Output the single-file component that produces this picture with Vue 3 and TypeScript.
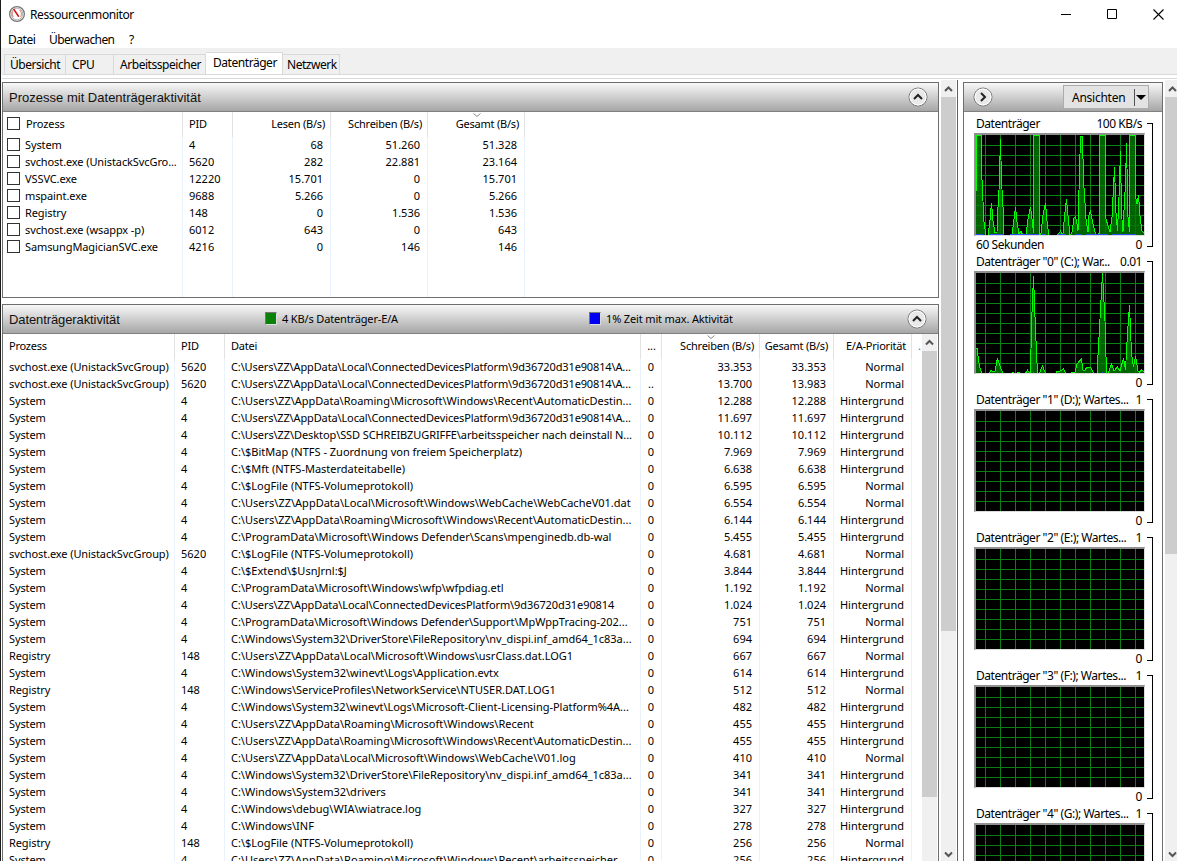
<script setup lang="ts">
interface Proc { name: string; pid: string; read: string; write: string; total: string }
interface Act { name: string; pid: string; file: string; read: string; write: string; total: string; prio: string }
interface Chart { title: string; max: string; min: string; foot: string; points: string; blue: string }

const tabs = [
  { label: 'Übersicht', cls: 't1' },
  { label: 'CPU', cls: 't2' },
  { label: 'Arbeitsspeicher', cls: 't3' },
  { label: 'Datenträger', cls: 't4 active' },
  { label: 'Netzwerk', cls: 't5' },
]

const procs: Proc[] = [
  ['System', '4', '68', '51.260', '51.328'],
  ['svchost.exe (UnistackSvcGro...', '5620', '282', '22.881', '23.164'],
  ['VSSVC.exe', '12220', '15.701', '0', '15.701'],
  ['mspaint.exe', '9688', '5.266', '0', '5.266'],
  ['Registry', '148', '0', '1.536', '1.536'],
  ['svchost.exe (wsappx -p)', '6012', '643', '0', '643'],
  ['SamsungMagicianSVC.exe', '4216', '0', '146', '146'],
].map(([name, pid, read, write, total]) => ({ name, pid, read, write, total }))

const S = 'System'
const G = 'svchost.exe (UnistackSvcGroup)'
const R = 'Registry'
const H = 'Hintergrund'
const N = 'Normal'
const U = 'C:\\Users\\ZZ\\AppData\\'
const W = 'C:\\Windows\\'
const acts: Act[] = [
  [G, '5620', U + 'Local\\ConnectedDevicesPlatform\\9d36720d31e90814\\A...', '0', '33.353', '33.353', N],
  [G, '5620', U + 'Local\\ConnectedDevicesPlatform\\9d36720d31e90814\\A...', '..', '13.700', '13.983', N],
  [S, '4', U + 'Roaming\\Microsoft\\Windows\\Recent\\AutomaticDestin...', '0', '12.288', '12.288', H],
  [S, '4', U + 'Local\\ConnectedDevicesPlatform\\9d36720d31e90814\\A...', '0', '11.697', '11.697', H],
  [S, '4', 'C:\\Users\\ZZ\\Desktop\\SSD SCHREIBZUGRIFFE\\arbeitsspeicher nach deinstall N...', '0', '10.112', '10.112', H],
  [S, '4', 'C:\\$BitMap (NTFS - Zuordnung von freiem Speicherplatz)', '0', '7.969', '7.969', H],
  [S, '4', 'C:\\$Mft (NTFS-Masterdateitabelle)', '0', '6.638', '6.638', H],
  [S, '4', 'C:\\$LogFile (NTFS-Volumeprotokoll)', '0', '6.595', '6.595', N],
  [S, '4', U + 'Local\\Microsoft\\Windows\\WebCache\\WebCacheV01.dat', '0', '6.554', '6.554', N],
  [S, '4', U + 'Roaming\\Microsoft\\Windows\\Recent\\AutomaticDestin...', '0', '6.144', '6.144', H],
  [S, '4', 'C:\\ProgramData\\Microsoft\\Windows Defender\\Scans\\mpenginedb.db-wal', '0', '5.455', '5.455', H],
  [G, '5620', 'C:\\$LogFile (NTFS-Volumeprotokoll)', '0', '4.681', '4.681', N],
  [S, '4', 'C:\\$Extend\\$UsnJrnl:$J', '0', '3.844', '3.844', H],
  [S, '4', 'C:\\ProgramData\\Microsoft\\Windows\\wfp\\wfpdiag.etl', '0', '1.192', '1.192', N],
  [S, '4', U + 'Local\\ConnectedDevicesPlatform\\9d36720d31e90814', '0', '1.024', '1.024', H],
  [S, '4', 'C:\\ProgramData\\Microsoft\\Windows Defender\\Support\\MpWppTracing-202...', '0', '751', '751', N],
  [S, '4', W + 'System32\\DriverStore\\FileRepository\\nv_dispi.inf_amd64_1c83a...', '0', '694', '694', H],
  [R, '148', U + 'Local\\Microsoft\\Windows\\usrClass.dat.LOG1', '0', '667', '667', N],
  [S, '4', W + 'System32\\winevt\\Logs\\Application.evtx', '0', '614', '614', H],
  [R, '148', W + 'ServiceProfiles\\NetworkService\\NTUSER.DAT.LOG1', '0', '512', '512', N],
  [S, '4', W + 'System32\\winevt\\Logs\\Microsoft-Client-Licensing-Platform%4A...', '0', '482', '482', H],
  [S, '4', U + 'Roaming\\Microsoft\\Windows\\Recent', '0', '455', '455', H],
  [S, '4', U + 'Roaming\\Microsoft\\Windows\\Recent\\AutomaticDestin...', '0', '455', '455', H],
  [S, '4', U + 'Local\\Microsoft\\Windows\\WebCache\\V01.log', '0', '410', '410', N],
  [S, '4', W + 'System32\\DriverStore\\FileRepository\\nv_dispi.inf_amd64_1c83a...', '0', '341', '341', H],
  [S, '4', W + 'System32\\drivers', '0', '341', '341', H],
  [S, '4', W + 'debug\\WIA\\wiatrace.log', '0', '327', '327', H],
  [S, '4', W + 'INF', '0', '278', '278', H],
  [R, '148', 'C:\\$LogFile (NTFS-Volumeprotokoll)', '0', '256', '256', N],
  [S, '4', U + 'Roaming\\Microsoft\\Windows\\Recent\\arbeitsspeicher', '0', '256', '256', H],
].map(([name, pid, file, read, write, total, prio]) => ({ name, pid, file, read, write, total, prio }))

function spacing(file: string): string {
  if (file.includes('ConnectedDevices')) return file.endsWith('...') ? 'tight' : 'semi'
  if (file.includes('SCHREIBZUGRIFFE')) return 'semi'
  if (file.endsWith('...')) return 'slight'
  return ''
}

const load = '0,57 1,0 5,0 6,45 8,87 10,101 12,101 14,85 15.5,68 17,86 19,98 20,97 21,97 22,72 23,55 24.5,4 25.5,45 27,72 28,101 36,101 38,84 39.5,72 41,87 43,99 45,96 47,101 50,101 52,84 54.5,72 56,84 57.5,98 57.5,0 63.5,0 63.5,101 65,98 67,80 69.5,68 71,86 73,101 81,101 84.5,96 86,99 87,98 89,77 90.5,64 92,81 94,101 96,97 98,83 99.5,82 101,89 102,96 103,55 104.5,1 106.5,1 107.5,45 109,68 110,84 112,97 113,80 114.5,76 117,89 119,97 121,101 123.5,98 123.5,0 129.5,0 129.5,82 132,91 134,97 136,82 138.5,32 140,78 141.5,96 143,62 144.5,16 145.5,78 147,97 148,75 149.5,48 150.5,8 152,82 153.5,97 153.5,0 159.5,0 159.5,61 161,69 162.5,60 164,81 166,96 168,98'
const queue = '0,75 1,75 3,90 4.5,97 6.5,101 13,101 15,97 17,99 19,98 21.5,85 24,93 27,101 35,101 37,99 39,101 43,99 45,101 49,101 51.5,97 53,99 54.5,100 55.5,52 57.5,3 59.5,57 61.5,101 63,101 66.5,93 69,99 71,101 79,101 81.5,98 84,98 87.5,96 90,101 94,101 96,99 99,99 101,91 103.5,88 105.5,86 107,97 109,97 111,94 115,95 118,101 121,101 123.5,55 126.5,0 129,48 130.5,101 132,101 135.5,91 138,98 141.5,94 144,98 147.5,85 149.5,97 151.5,60 153.5,32 155.5,80 157.5,94 159.5,83 162,98 163.5,99 165.5,97 168,99'

const charts: Chart[] = [
  { title: 'Datenträger', max: '100 KB/s', min: '0', foot: '60 Sekunden', points: load, blue: 'M0 99.5H7M13 99.5H28M34 99.5H63M66 99.5H70M82 99.5H90M100 99.5H106M110 99.5H132M136 99.5H160' },
  { title: 'Datenträger "0" (C:); War...', max: '0.01', min: '0', foot: '', points: queue, blue: 'M21 99.5H22M57 99.5H58M126 99.5H127M153 99.5H154' },
  ...['"1" (D:)', '"2" (E:)', '"3" (F:)', '"4" (G:)'].map((d) => ({
    title: `Datenträger ${d}; Wartes...`, max: '1', min: '0', foot: '', points: '', blue: '',
  })),
]

const grid =
  Array.from({ length: 9 }, (_, i) => `M0 ${i * 10 + 10.5}H168`).join('') +
  Array.from({ length: 11 }, (_, i) => `M${i * 15 + 9.5} 0V100`).join('')
</script>

<template>
  <div class="window">
    <header class="titlebar">
      <svg class="logo" width="18" height="18" viewBox="0 0 18 18">
        <circle cx="9" cy="9" r="7.4" fill="#f4f4f2" stroke="#77777a" stroke-width="1.3" />
        <circle cx="9" cy="9" r="5.8" fill="#fff" stroke="#b9b9b4" stroke-width="1" />
        <path d="M5 6.2A5 5 0 0 0 5.3 12M11.5 5A5 5 0 0 1 12.5 12" fill="none" stroke="#d99a80" stroke-width="1.2" />
        <path d="M4.8 4.2L6.4 3.8L11.6 11.6L10 12Z" fill="#d4141c" />
      </svg>
      <span class="app-name">Ressourcenmonitor</span>
      <div class="controls">
        <svg width="11" height="11"><path d="M0 5.5H10" stroke="#000" /></svg>
        <svg width="11" height="11"><path d="M.5 .5H9.5V9.5H.5Z" fill="none" stroke="#000" /></svg>
        <svg width="11" height="11"><path d="M.5 .5L10.5 10.5M10.5 .5L.5 10.5" stroke="#000" stroke-width="1.1" /></svg>
      </div>
    </header>
    <nav class="menu"><span class="m1">Datei</span><span class="m2">Überwachen</span><span>?</span></nav>
    <div class="tabs">
      <div v-for="t in tabs" :key="t.label" class="tab" :class="t.cls"><span>{{ t.label }}</span></div>
    </div>
    <div class="strip"></div>

    <main class="body">
      <div class="left">
        <section class="panel procs">
          <div class="bar">
            <h2>Prozesse mit Datenträgeraktivität</h2>
            <svg class="round" width="20" height="20" viewBox="0 0 20 20">
              <circle cx="10" cy="10" r="9" fill="#e9e9e9" stroke="#777" /><circle cx="10" cy="10" r="8" fill="none" stroke="#fff" />
              <path d="M6 12L10 8L14 12" fill="none" stroke="#222" stroke-width="2" />
            </svg>
          </div>
          <div class="table p-table">
            <div class="row head">
              <div class="chk"><i></i><span>Prozess</span></div><div>PID</div><div class="r">Lesen (B/s)</div>
              <div class="r">Schreiben (B/s)</div><div class="r">Gesamt (B/s)<svg class="sort" width="8" height="4"><path d="M.5 .5L4 3.5L7.5 .5" fill="none" stroke="#888" /></svg></div>
            </div>
            <div v-for="p in procs" :key="p.name" class="row">
              <div class="chk"><i></i><span>{{ p.name }}</span></div><div>{{ p.pid }}</div><div class="r">{{ p.read }}</div>
              <div class="r">{{ p.write }}</div><div class="r">{{ p.total }}</div>
            </div>
            <div class="row rest"><div v-for="n in 5" :key="n"></div></div>
          </div>
        </section>

        <section class="panel acts">
          <div class="bar">
            <h2 class="narrow">Datenträgeraktivität</h2>
            <div class="legend l1"><i class="green"></i>4 KB/s Datenträger-E/A</div>
            <div class="legend l2"><i class="blue"></i>1% Zeit mit max. Aktivität</div>
            <svg class="round" width="20" height="20" viewBox="0 0 20 20">
              <circle cx="10" cy="10" r="9" fill="#e9e9e9" stroke="#777" /><circle cx="10" cy="10" r="8" fill="none" stroke="#fff" />
              <path d="M6 12L10 8L14 12" fill="none" stroke="#222" stroke-width="2" />
            </svg>
          </div>
          <div class="a-wrap">
            <div class="table a-table">
              <div class="row head">
                <div>Prozess</div><div>PID</div><div>Datei</div><div class="r">...</div>
                <div class="r">Schreiben (B/s)<svg class="sort" width="8" height="4"><path d="M.5 .5L4 3.5L7.5 .5" fill="none" stroke="#888" /></svg></div>
                <div class="r">Gesamt (B/s)</div><div class="r">E/A-Priorität</div><div class="cut">.</div>
              </div>
              <div v-for="(a, i) in acts" :key="i" class="row">
                <div class="name">{{ a.name }}</div><div>{{ a.pid }}</div><div :class="spacing(a.file)">{{ a.file }}</div><div class="r">{{ a.read }}</div>
                <div class="r">{{ a.write }}</div><div class="r">{{ a.total }}</div><div class="r">{{ a.prio }}</div><div></div>
              </div>
            </div>
            <div class="scroll s-inner">
              <svg width="15" height="17"><path d="M4 10.5L7.5 7L11 10.5" fill="none" stroke="#555" stroke-width="2" /></svg>
              <div class="thumb"></div>
            </div>
          </div>
        </section>
      </div>

      <div class="scroll s-mid">
        <svg width="15" height="17"><path d="M4 11L7.5 7.5L11 11" fill="none" stroke="#555" stroke-width="2" /></svg>
        <div class="thumb"></div>
        <svg class="down" width="15" height="12"><path d="M4 3.5L7.5 7L11 3.5" fill="none" stroke="#555" stroke-width="2" /></svg>
      </div>
      <div class="split"></div>

      <aside class="right">
        <div class="bar">
          <svg class="go" width="20" height="20" viewBox="0 0 20 20">
            <circle cx="10" cy="10" r="9" fill="#e9e9e9" stroke="#777" /><circle cx="10" cy="10" r="8" fill="none" stroke="#fff" />
            <path d="M8 6L12 10L8 14" fill="none" stroke="#222" stroke-width="2" />
          </svg>
          <div class="views"><span>Ansichten</span><b></b><svg width="10" height="5"><path d="M0 0H10L5 5Z" fill="#000" /></svg></div>
        </div>
        <div v-for="c in charts" :key="c.title" class="chart">
          <div class="plot">
            <div class="cap"><span>{{ c.title }}</span><span>{{ c.max }}</span></div>
            <div class="frame">
              <svg width="168" height="100" shape-rendering="crispEdges">
                <rect width="168" height="100" fill="#000" />
                <path :d="grid" stroke="#0a7d14" fill="none" />
                <polygon v-if="c.points" :points="`0,101 ${c.points} 168,101`" fill="#006400" />
                <path v-if="c.points" :d="grid" stroke="#0a8a14" fill="none" opacity="0.55" />
                <polyline v-if="c.points" :points="c.points" fill="none" stroke="#00ff00" />
                <path v-if="c.blue" :d="c.blue" stroke="#2a50f0" />
              </svg>
            </div>
            <div class="cap foot"><span>{{ c.foot }}</span><span>{{ c.min }}</span></div>
          </div>
          <div class="bracket"></div>
        </div>
      </aside>

      <div class="scroll s-right">
        <svg width="15" height="17"><path d="M4 11L7.5 7.5L11 11" fill="none" stroke="#555" stroke-width="2" /></svg>
        <div class="thumb"></div>
        <svg class="down" width="15" height="12"><path d="M4 3.5L7.5 7L11 3.5" fill="none" stroke="#555" stroke-width="2" /></svg>
      </div>
    </main>
  </div>
</template>

<style>
body { margin: 0; overflow: hidden; background: #fff; }
</style>

<style scoped>
* { box-sizing: border-box; }
.window {
  width: 1177px; height: 861px; overflow: hidden; background: #fff; color: #000;
  border-left: 1px solid #1c1c1c; display: flex; flex-direction: column;
  font-family: "Noto Sans", "Open Sans", sans-serif; font-size: 11px; white-space: nowrap;
}
svg { display: block; flex: none; }
.titlebar { height: 30px; flex: none; display: flex; align-items: center; padding-left: 7px; }
.logo { margin-top: -2px; }
.app-name { font-size: 12px; margin: -2px 0 0 4px; letter-spacing: -0.4px; }
.controls { margin-left: auto; display: flex; gap: 35px; padding-right: 13px; margin-top: -2px; }
.menu { height: 18px; flex: none; display: flex; align-items: center; padding: 2px 0 0 7px; font-size: 12px; letter-spacing: -0.45px; line-height: 16px; }
.m1 { width: 41px; }
.m2 { width: 80px; letter-spacing: -0.6px; }
.tabs { height: 26px; flex: none; background: #f0f0f0; display: flex; align-items: flex-end; padding-left: 3px; }
.tab { height: 20px; border: 1px solid #d9d9d9; border-bottom: 0; border-left-width: 0; font-size: 12px; line-height: 20px; letter-spacing: -0.45px; padding-left: 6px; }
.t1 { width: 62px; border-left-width: 1px; padding-left: 5px; }
.t2 { width: 48px; }
.t3 { width: 92px; }
.t4 { width: 77px; height: 22px; background: #fff; line-height: 20px; padding-left: 7px; }
.t5 { width: 57px; padding-left: 4px; }
.strip { height: 5px; flex: none; margin-left: 1px; border-top: 1px solid #d9d9d9; border-bottom: 1px solid #d9d9d9; background: #fff; }
.body { flex: 1; min-height: 0; display: flex; padding-left: 1px; }
.left { width: 937px; flex: none; padding-top: 3px; display: flex; flex-direction: column; gap: 6px; }
.panel { border: 1px solid #6e6e6e; background: #fff; overflow: hidden; }
.procs { height: 216px; flex: none; }
.acts { flex: 1; min-height: 0; border-bottom: 0; display: flex; flex-direction: column; }
.bar { height: 29px; flex: none; display: flex; align-items: center; border-bottom: 1px solid #808080; background: linear-gradient(#f8f8f8, #a6a6a6); position: relative; }
h2 { margin: 0; padding-left: 6px; font: 13px "Liberation Sans", Arial, sans-serif; color: #111; letter-spacing: 0.01px; }
.narrow { letter-spacing: -0.1px; }
.round { position: absolute; right: 10px; top: 4px; }
.acts .round { right: 11px; }
.legend { position: absolute; top: 0; height: 27px; display: flex; align-items: center; gap: 5px; letter-spacing: -0.15px; }
.l1 { left: 262px; }
.l2 { left: 586px; }
.legend i { width: 12px; height: 13px; border: 1px solid #777; border-right-color: #ddd; border-bottom-color: #ddd; }
.green { background: radial-gradient(#0a4a0a 35%, #088208 45%) 0 0 / 2px 2px; }
.blue { background: radial-gradient(#0000a0 35%, #0000f0 45%) 0 0 / 2px 2px; }
.table { display: flex; flex-direction: column; height: 100%; }
.row { display: grid; height: 17px; flex: none; line-height: 15px; }
.row > div { border-right: 1px solid #e9f2fd; padding-left: 6px; overflow: hidden; position: relative; }
.row > div.r { text-align: right; padding: 0 7px 0 0; }
.head { height: 25px; line-height: 23px; letter-spacing: -0.22px; }
.head > div { border-right-color: #e2e2e2; }
.head > div.r { padding-right: 5px; }
.p-table .row { grid-template-columns: 180px 50px 98px 97px 97px; }
.sort { position: absolute; top: 1px; left: 45px; }
.chk { display: flex; align-items: center; letter-spacing: -0.1px; }
.row > div.chk { padding: 0 0 2px 4px; }
.chk i { width: 13px; height: 13px; border: 1px solid #333; background: #fff; margin-right: 5px; flex: none; }
.head .chk i { margin-right: 6px; }
.p-table .rest { flex: 1; height: auto; }
.a-wrap { flex: 1; min-height: 0; display: flex; }
.a-table { width: 918px; flex: none; }
.a-table .row { grid-template-columns: 172px 50px 416px 21px 98px 74px 78px 9px; }
.a-table .row > div:last-child { border: 0; }
.a-table .row > div:nth-child(4) { padding-right: 7px; }
.a-table .head > div:nth-child(4) { padding-right: 5px; letter-spacing: 0; }
.name { letter-spacing: -0.1px; }
.tight { letter-spacing: -0.13px; }
.semi { letter-spacing: -0.09px; }
.slight { letter-spacing: -0.02px; }
.a-table .cut { color: #17c; }
.scroll { background: #f0f0f0; width: 15px; flex: none; display: flex; flex-direction: column; }
.thumb { background: #cdcdcd; }
.s-inner { margin-left: 1px; }
.s-inner .thumb { height: 446px; }
.s-mid { margin: 1px 0 0 2px; }
.s-mid .thumb { height: 534px; }
.down { margin-top: auto; }
.split { width: 1px; flex: none; margin: 1px 0 0 1px; background: #606060; }
.right { width: 200px; flex: none; margin: 3px 0 0 5px; border: 1px solid #6e6e6e; border-bottom: 0; overflow: hidden; }
.go { margin-left: 9px; }
.views { margin-left: auto; margin-right: 13px; width: 86px; height: 24px; border: 1px solid #acacac; background: #e3e3e3; display: flex; align-items: center; font-size: 12px; padding: 0 2px 0 8px; letter-spacing: -0.25px; }
.views b { width: 1px; height: 17px; background: #555; margin-left: auto; margin-right: 1px; }
.chart { height: 138px; display: flex; padding-left: 10px; }
.plot { width: 171px; flex: none; }
.cap { height: 21px; display: flex; justify-content: space-between; padding: 4px 3px 0 2px; line-height: 15px; font-size: 12px; letter-spacing: -0.45px; }
.frame { height: 103px; border: 1px solid #dcdcdc; border-top: 2px solid #909090; border-left: 2px solid #909090; }
.foot { height: 14px; padding-top: 1px; }
.bracket { width: 6px; height: 124px; margin: 11px 0 0 2px; border: 1px solid #000; border-left: 0; }
.s-right { margin: 1px 0 0 2px; }
.s-right .thumb { height: 457px; }
</style>
